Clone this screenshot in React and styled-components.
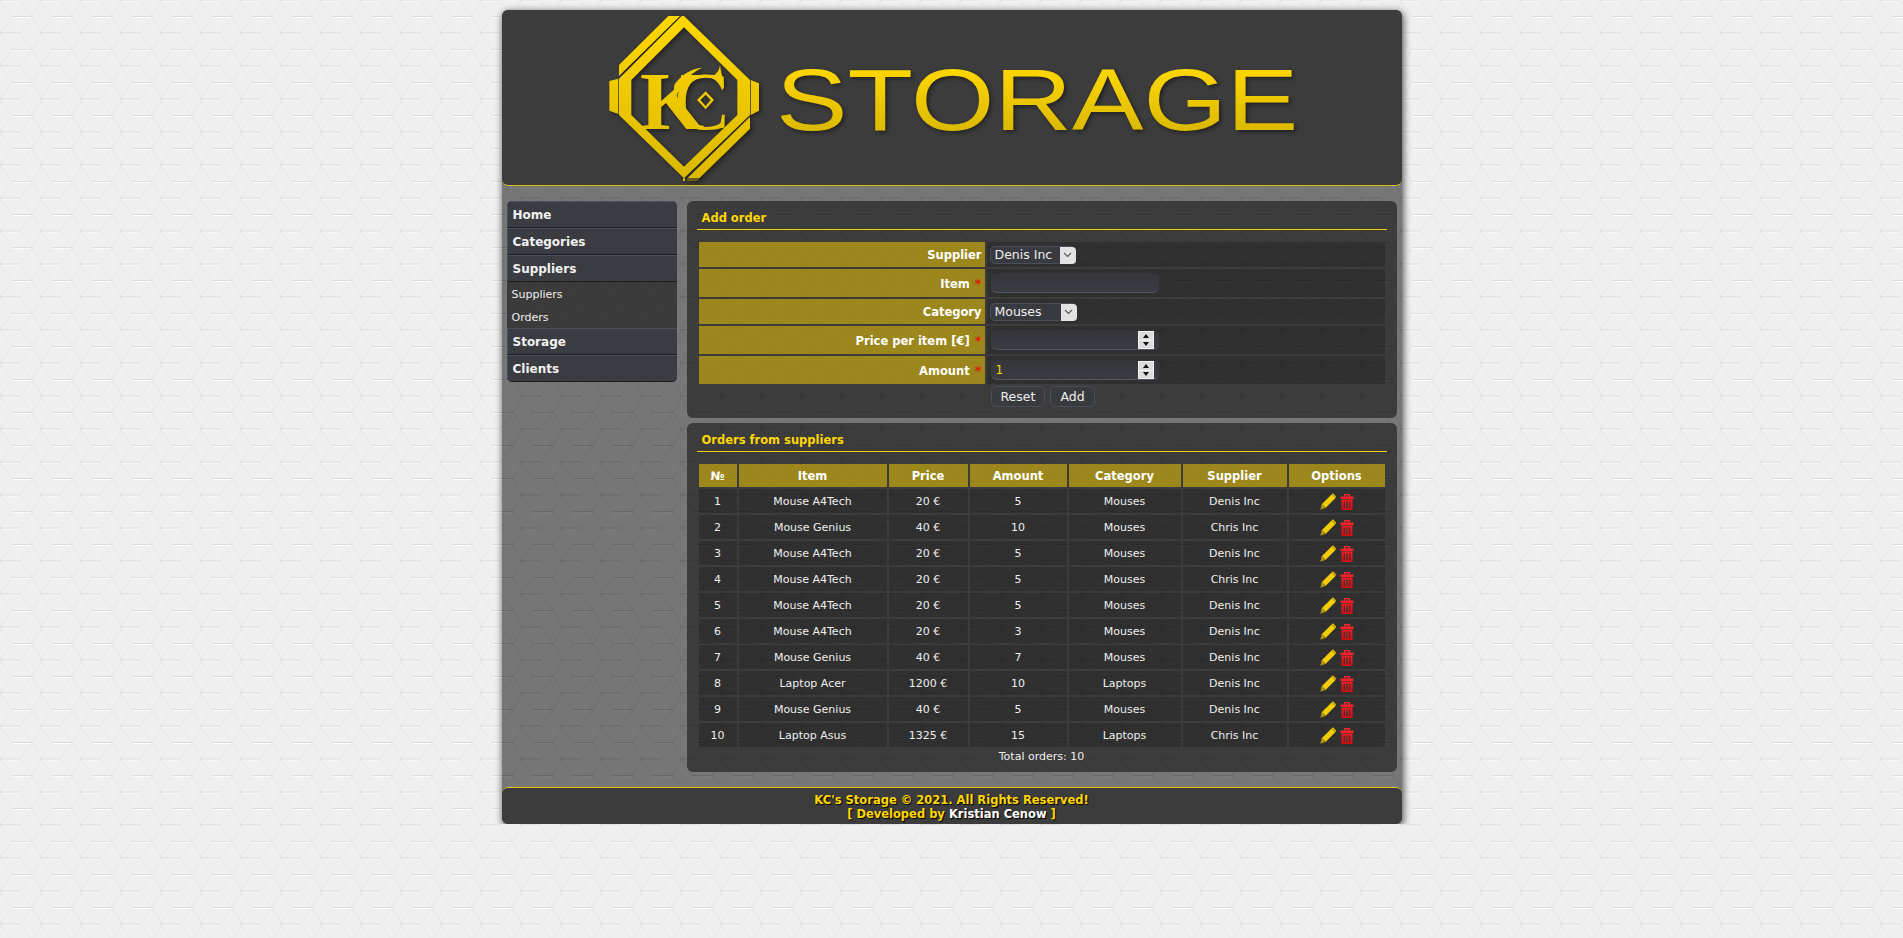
import React from 'react';
import styled, { createGlobalStyle } from 'styled-components';

const hexTile = (line, light, fade) => {
  const flat = 'M12 16.5H32M0 0H20M0 33H20';
  const slant = 'M32 16.5L40 3.3M32 16.5L40 29.7M0 3.3L2 0M0 29.7L2 33M20 0L32 16.5M20 33L32 16.5M12 16.5L0 0M12 16.5L0 33';
  const svg = `<svg xmlns="http://www.w3.org/2000/svg" width="40" height="33" viewBox="0 0 40 33"><g fill="none"><path d="${flat}" stroke="${light}" transform="translate(0 1)"/><path d="${flat}" stroke="${line}"/><path d="${slant}" stroke="${line}" stroke-opacity="${fade}"/></g></svg>`;
  return `url("data:image/svg+xml,${encodeURIComponent(svg)}")`;
};

const bodyPattern = hexTile('#dcdcdc', '#fcfcfc', 0.45);
const greyPattern = hexTile('#686868', '#7b7b7b', 0.5);
const darkPattern = hexTile('#353535', '#3f3f3f', 0.6);

const GlobalStyle = createGlobalStyle`
  body {
    margin: 0;
    background: #f0f0f0 ${bodyPattern} fixed;
    font-family: "DejaVu Sans", Verdana, sans-serif;
    font-size: 11px;
    color: #eee;
  }
`;

const orders = [
  [1, 'Mouse A4Tech', '20 €', 5, 'Mouses', 'Denis Inc'],
  [2, 'Mouse Genius', '40 €', 10, 'Mouses', 'Chris Inc'],
  [3, 'Mouse A4Tech', '20 €', 5, 'Mouses', 'Denis Inc'],
  [4, 'Mouse A4Tech', '20 €', 5, 'Mouses', 'Chris Inc'],
  [5, 'Mouse A4Tech', '20 €', 5, 'Mouses', 'Denis Inc'],
  [6, 'Mouse A4Tech', '20 €', 3, 'Mouses', 'Denis Inc'],
  [7, 'Mouse Genius', '40 €', 7, 'Mouses', 'Denis Inc'],
  [8, 'Laptop Acer', '1200 €', 10, 'Laptops', 'Denis Inc'],
  [9, 'Mouse Genius', '40 €', 5, 'Mouses', 'Denis Inc'],
  [10, 'Laptop Asus', '1325 €', 15, 'Laptops', 'Chris Inc'],
];

const columns = [
  ['№', 38],
  ['Item', 148],
  ['Price', 79],
  ['Amount', 97],
  ['Category', 112],
  ['Supplier', 104],
  ['Options', 96],
];

const Logo = () => (
  <LogoSvg viewBox="351 30 2070 528">
    <defs>
      <linearGradient id="frameGold" gradientUnits="userSpaceOnUse" x1="0" y1="48" x2="0" y2="540">
        <stop offset="0" stopColor="#ffd800" />
        <stop offset="1" stopColor="#dcb800" />
      </linearGradient>
      <linearGradient id="wordGold" gradientUnits="userSpaceOnUse" x1="0" y1="200" x2="0" y2="392">
        <stop offset="0" stopColor="#ffd800" />
        <stop offset="1" stopColor="#dcb900" />
      </linearGradient>
    </defs>
    <g fill="url(#frameGold)">
      <path
        fillRule="evenodd"
        d="M582 48L780 240V345L582 535L387 345V236L575 48ZM582 82L424 240V345L582 500L742 345V240Z"
      />
      <path d="M387 195L535 48H570L387 228Z" />
      <path d="M780 350V386L628 535H592Z" />
      <path d="M358 243L385 236V342L358 332Z" />
      <path d="M782 240L807 250V332L782 345Z" />
      <path d="M579 535H585V543H579Z" />
      <LogoLetters x="450" y="386" fontSize="250">
        <KTspan letterSpacing="-93">K</KTspan>C
      </LogoLetters>
      <path d="M636 203C604 206 578 222 556 250C548 262 553 280 560 296C562 272 580 232 636 203Z" />
      <path d="M690 195C694 226 704 246 697 272C690 252 676 238 660 232C676 226 688 214 690 195Z" />
      <path
        fillRule="evenodd"
        d="M647 274L672 300L647 328L621 300ZM647 284L631 300L647 318L662 300Z"
      />
    </g>
    <path d="M591 535H628L622 543H591Z" fill="#6b5c12" />
    <WordMark x="858" y="389" fontSize="260" textLength="1567" lengthAdjust="spacingAndGlyphs">
      STORAGE
    </WordMark>
  </LogoSvg>
);

const PencilIcon = () => (
  <ActionSvg width="16" height="17" viewBox="0 0 16 17">
    <path d="M0.5 16.5L2 11L11.5 1.5L15.5 5L6 14.5Z" fill="#f2cd00" />
    <path d="M0.5 16.5L2 11L6 14.5Z" fill="#a98f10" />
    <path d="M11.5 1.5L13 0.3L16 3.2L15.5 5Z" fill="#d8b600" />
  </ActionSvg>
);

const TrashIcon = () => (
  <ActionSvg width="14" height="16" viewBox="0 0 14 16">
    <defs>
      <linearGradient id="trashRed" x1="0" y1="0" x2="0" y2="1">
        <stop offset="0" stopColor="#ff2a30" />
        <stop offset="1" stopColor="#d40c12" />
      </linearGradient>
    </defs>
    <path
      fill="url(#trashRed)"
      fillRule="evenodd"
      d="M4 0H10V2.5H13.5V5H0.5V2.5H4ZM5.3 1.2V2.5H8.7V1.2ZM1.5 5.5H12.5V16H1.5ZM3.6 7.5V14.5H4.8V7.5ZM6.4 7.5V14.5H7.6V7.5ZM9.2 7.5V14.5H10.4V7.5Z"
    />
  </ActionSvg>
);

const Required = () => <Star>*</Star>;

const NumberField = ({ defaultValue }) => (
  <FieldWrap>
    <Input type="number" defaultValue={defaultValue} />
    <Spinner>
      <SpinArrow />
      <SpinArrow $down />
    </Spinner>
  </FieldWrap>
);

const SelectField = ({ width, value }) => (
  <SelectWrap $width={width}>
    <Select defaultValue={value}>
      <option>{value}</option>
    </Select>
    <SelectArrow>
      <svg width="9" height="6" viewBox="0 0 9 6">
        <path d="M1 1L4.5 4.5L8 1" fill="none" stroke="#555" strokeWidth="1.1" />
      </svg>
    </SelectArrow>
  </SelectWrap>
);

const App = () => {
  return (
    <>
      <GlobalStyle />
      <Page>
        <Header>
          <Logo />
        </Header>
        <Content>
          <Sidebar>
            <NavItem>Home</NavItem>
            <NavItem>Categories</NavItem>
            <NavItem>Suppliers</NavItem>
            <SubMenu>
              <SubItem>Suppliers</SubItem>
              <SubItem>Orders</SubItem>
            </SubMenu>
            <NavItem>Storage</NavItem>
            <NavItem>Clients</NavItem>
          </Sidebar>
          <Main>
            <Panel>
              <PanelTitle>Add order</PanelTitle>
              <Table>
                <tbody>
                  <tr>
                    <LabelCell $height={25}>Supplier</LabelCell>
                    <ValueCell><SelectField width={86} value="Denis Inc" /></ValueCell>
                  </tr>
                  <tr>
                    <LabelCell $height={28}>Item <Required /></LabelCell>
                    <ValueCell>
                      <FieldWrap><Input type="text" /></FieldWrap>
                    </ValueCell>
                  </tr>
                  <tr>
                    <LabelCell $height={25}>Category</LabelCell>
                    <ValueCell><SelectField width={87} value="Mouses" /></ValueCell>
                  </tr>
                  <tr>
                    <LabelCell $height={28}>Price per item [€] <Required /></LabelCell>
                    <ValueCell><NumberField /></ValueCell>
                  </tr>
                  <tr>
                    <LabelCell $height={28}>Amount <Required /></LabelCell>
                    <ValueCell><NumberField defaultValue={1} /></ValueCell>
                  </tr>
                </tbody>
              </Table>
              <Buttons>
                <Button type="reset">Reset</Button>
                <Button type="button">Add</Button>
              </Buttons>
            </Panel>
            <Panel>
              <PanelTitle>Orders from suppliers</PanelTitle>
              <Table>
                <thead>
                  <tr>
                    {columns.map(([name, width]) => (
                      <HeadCell key={name} $width={width}>{name}</HeadCell>
                    ))}
                  </tr>
                </thead>
                <tbody>
                  {orders.map((row) => (
                    <tr key={row[0]}>
                      {row.map((value, i) => (
                        <Cell key={i}>{value}</Cell>
                      ))}
                      <Cell>
                        <Actions>
                          <PencilIcon />
                          <TrashIcon />
                        </Actions>
                      </Cell>
                    </tr>
                  ))}
                </tbody>
              </Table>
              <Total>Total orders: 10</Total>
            </Panel>
          </Main>
        </Content>
        <Footer>
          KC's Storage © 2021. All Rights Reserved!
          <br />
          [ Developed by <Author>Kristian Cenow</Author> ]
        </Footer>
      </Page>
    </>
  );
};

const Page = styled.div`
  width: 900px;
  margin: 10px auto 0;
  background: #777 ${greyPattern} fixed;
  border-radius: 6px;
  box-shadow: 1px 2px 7px 1px rgba(0, 0, 0, 0.6);
`;

const Header = styled.header`
  height: 176px;
  box-sizing: border-box;
  background: #3c3c3c;
  border-bottom: 1px solid #d9bb12;
  border-radius: 6px;
  overflow: hidden;
`;

const LogoSvg = styled.svg`
  display: block;
  width: 690px;
  height: 176px;
  margin: 0 auto;
  filter: drop-shadow(2px 2px 2px rgba(0, 0, 0, 0.45));
`;

const LogoLetters = styled.text`
  font-family: "Liberation Serif", serif;
`;

const KTspan = styled.tspan`
  font-weight: bold;
`;

const WordMark = styled.text`
  font-family: "Liberation Sans", sans-serif;
  fill: url(#wordGold);
`;

const Content = styled.div`
  display: flex;
  align-items: flex-start;
  gap: 10px;
  padding: 15px 5px;
`;

const Sidebar = styled.nav`
  width: 170px;
  flex: none;
  border-radius: 5px;
  overflow: hidden;
  background: #3c3c3c;
`;

const NavItem = styled.div`
  height: 27px;
  box-sizing: border-box;
  padding-left: 5px;
  line-height: 26px;
  font-size: 12px;
  font-weight: bold;
  color: #f2f2f2;
  background: #3b3c41;
  border-top: 1px solid #4a505e;
  border-left: 1px solid #4a505e;
  border-bottom: 1px solid #1e1f23;
`;

const SubMenu = styled.div`
  background: #3b3b3b ${darkPattern} fixed;
`;

const SubItem = styled.div`
  height: 23px;
  padding-left: 5px;
  line-height: 25px;
  font-size: 11px;
  color: #eee;
`;

const Main = styled.main`
  width: 710px;
  display: flex;
  flex-direction: column;
  gap: 5px;
`;

const Panel = styled.section`
  padding: 0 10px 9px;
  background: #3c3c3c ${darkPattern} fixed;
  border-radius: 6px;
`;

const PanelTitle = styled.h2`
  height: 28px;
  margin: 0 0 10px;
  padding-left: 5px;
  line-height: 35px;
  font-size: 11.5px;
  font-weight: bold;
  color: #ffd700;
  border-bottom: 1px solid #f0cd10;
`;

const Table = styled.table`
  width: 690px;
  table-layout: fixed;
  border-collapse: separate;
  border-spacing: 2px;
`;

const LabelCell = styled.th`
  width: 286px;
  height: ${(p) => p.$height}px;
  box-sizing: border-box;
  padding: 1px 3px 0 0;
  text-align: right;
  font-size: 11.5px;
  font-weight: bold;
  color: #fff;
  background: rgba(165, 143, 24, 0.9);
`;

const ValueCell = styled.td`
  padding: 0 0 0 3px;
  background: rgba(0, 0, 0, 0.2);
`;

const Star = styled.span`
  color: #e01a0a;
  font-size: 13px;
  line-height: 0;
  margin-left: 1px;
`;

const SelectWrap = styled.div`
  position: relative;
  width: ${(p) => p.$width}px;
  height: 18px;
`;

const Select = styled.select`
  appearance: none;
  display: block;
  width: 100%;
  height: 18px;
  padding: 0 0 0 4px;
  font-family: "DejaVu Sans", Verdana, sans-serif;
  font-size: 12.5px;
  color: #eee;
  background: #393a40;
  border: 1px solid #4a4e5a;
  border-radius: 5px;
`;

const SelectArrow = styled.span`
  position: absolute;
  top: 1px;
  right: 0;
  width: 16px;
  height: 17px;
  display: flex;
  align-items: center;
  justify-content: center;
  background: #e2e2e2;
  border-radius: 0 4px 4px 0;
`;

const FieldWrap = styled.div`
  position: relative;
  width: 168px;
  height: 20px;
  margin-left: 1px;
`;

const Input = styled.input`
  appearance: textfield;
  display: block;
  width: 100%;
  height: 20px;
  box-sizing: border-box;
  padding: 0 5px;
  font-family: "DejaVu Sans", Verdana, sans-serif;
  font-size: 12px;
  color: #ffd700;
  background: linear-gradient(#35363a, #3b3c42);
  border: none;
  border-bottom: 1px solid #4f5564;
  border-radius: 6px;
  outline: none;
`;

const Spinner = styled.span`
  position: absolute;
  top: 1px;
  right: 5px;
  width: 16px;
  display: flex;
  flex-direction: column;
  gap: 1px;
  padding: 1px;
  box-sizing: border-box;
  height: 18px;
  background: #f2f2f2;
`;

const SpinArrow = styled.span`
  flex: 1;
  display: flex;
  align-items: center;
  justify-content: center;
  background: #dcdcdc;
  &::after {
    content: '';
    border-left: 3px solid transparent;
    border-right: 3px solid transparent;
    ${(p) => (p.$down ? 'border-top: 4px solid #111;' : 'border-bottom: 4px solid #111;')}
  }
`;

const Buttons = styled.div`
  display: flex;
  gap: 5px;
  margin: 0 0 2px 294px;
`;

const Button = styled.button`
  height: 21px;
  padding: 0 9px;
  font-family: "DejaVu Sans", Verdana, sans-serif;
  font-size: 12.5px;
  color: #eee;
  background: #393a3e;
  border: 1px solid #4a4e5a;
  border-radius: 5px;
`;

const HeadCell = styled.th`
  width: ${(p) => p.$width}px;
  height: 23px;
  box-sizing: border-box;
  padding: 1px 0 0;
  font-size: 11.5px;
  font-weight: bold;
  color: #fff;
  text-align: center;
  background: rgba(165, 143, 24, 0.9);
`;

const Cell = styled.td`
  height: 24px;
  box-sizing: border-box;
  padding: 1px 0 0;
  font-size: 11px;
  color: #eee;
  text-align: center;
  background: rgba(0, 0, 0, 0.2);
`;

const Actions = styled.div`
  display: flex;
  justify-content: center;
  align-items: center;
  gap: 4px;
`;

const ActionSvg = styled.svg`
  display: block;
`;

const Total = styled.div`
  height: 14px;
  line-height: 16px;
  text-align: center;
  font-size: 11px;
  color: #eee;
`;

const Footer = styled.footer`
  height: 37px;
  box-sizing: border-box;
  padding-top: 5px;
  line-height: 14px;
  text-align: center;
  font-size: 11.5px;
  font-weight: bold;
  color: #ffd700;
  text-shadow: 1px 1px 1px #000;
  background: #3c3c3c;
  border-top: 1px solid #e6c60e;
  border-radius: 6px;
`;

const Author = styled.span`
  color: #fff;
`;

export default App;
